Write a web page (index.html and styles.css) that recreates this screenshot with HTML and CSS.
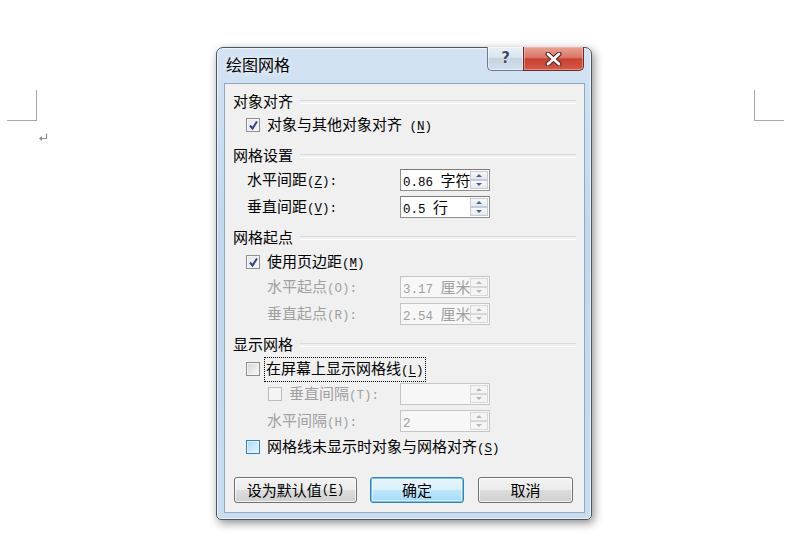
FILE: index.html
```html
<!DOCTYPE html>
<html lang="zh-CN">
<head>
<meta charset="utf-8">
<title>绘图网格</title>
<link rel="stylesheet" href="styles.css">
</head>
<body>
<div class="desk">
  <div class="mark mark-left"></div>
  <div class="mark mark-right"></div>
  <svg class="ret" width="10" height="9" viewBox="0 0 10 9"><path d="M8.5 0.5 V5.5 H2" fill="none" stroke="#8a8a8a" stroke-width="1.2"/><path d="M1 5.5 L4 3 L4 8 Z" fill="#8a8a8a"/></svg>

  <div class="window">
    <div class="titlebar">
      <span class="title">绘图网格</span>
      <div class="caption-btns">
        <div class="cbtn help"><span>?</span></div>
        <div class="cbtn close">
          <svg width="17" height="14" viewBox="0 0 17 14"><path d="M3 2 L14 12 M14 2 L3 12" stroke="#5a2420" stroke-width="5" stroke-linecap="round"/><path d="M3 2 L14 12 M14 2 L3 12" stroke="#ffffff" stroke-width="2.8" stroke-linecap="round"/></svg>
        </div>
      </div>
    </div>

    <div class="client">
      <div class="heading first">对象对齐</div>
      <div class="row cbrow mt2">
        <span class="cb checked"><svg width="11" height="11" viewBox="0 0 11 11"><path d="M2 5.5 L4.5 8.5 L9 1.5" fill="none" stroke="#31438a" stroke-width="2"/></svg></span>
        <span>对象与其他对象对齐<span class="lat"> (<u>N</u>)</span></span>
      </div>

      <div class="heading">网格设置</div>
      <div class="row lblrow">
        <span class="lbl w153">水平间距<span class="lat">(<u>Z</u>):</span></span>
        <div class="spin"><span class="val"><span class="lat">0.86 </span>字符</span><span class="arrows"><i class="up"></i><i class="dn"></i></span></div>
      </div>
      <div class="row lblrow">
        <span class="lbl w153">垂直间距<span class="lat">(<u>V</u>):</span></span>
        <div class="spin"><span class="val"><span class="lat">0.5 </span>行</span><span class="arrows"><i class="up"></i><i class="dn"></i></span></div>
      </div>

      <div class="heading">网格起点</div>
      <div class="row cbrow">
        <span class="cb checked"><svg width="11" height="11" viewBox="0 0 11 11"><path d="M2 5.5 L4.5 8.5 L9 1.5" fill="none" stroke="#31438a" stroke-width="2"/></svg></span>
        <span>使用页边距<span class="lat">(<u>M</u>)</span></span>
      </div>
      <div class="row subrow mt1 disabled">
        <span class="lbl w133">水平起点<span class="lat">(O):</span></span>
        <div class="spin off"><span class="val"><span class="lat">3.17 </span>厘米</span><span class="arrows"><i class="up"></i><i class="dn"></i></span></div>
      </div>
      <div class="row subrow disabled">
        <span class="lbl w133">垂直起点<span class="lat">(R):</span></span>
        <div class="spin off"><span class="val"><span class="lat">2.54 </span>厘米</span><span class="arrows"><i class="up"></i><i class="dn"></i></span></div>
      </div>

      <div class="heading">显示网格</div>
      <div class="row cbrow">
        <span class="cb"></span>
        <span class="focus">在屏幕上显示网格线<span class="lat">(<u>L</u>)</span></span>
      </div>
      <div class="row subcb mt1 disabled">
        <span class="cb off"></span>
        <span class="lbl w111">垂直间隔<span class="lat">(T):</span></span>
        <div class="spin off"><span class="val"></span><span class="arrows"><i class="up"></i><i class="dn"></i></span></div>
      </div>
      <div class="row subrow disabled">
        <span class="lbl w133">水平间隔<span class="lat">(H):</span></span>
        <div class="spin off"><span class="val"><span class="lat">2</span></span><span class="arrows"><i class="up"></i><i class="dn"></i></span></div>
      </div>
      <div class="row cbrow mt2">
        <span class="cb hot"></span>
        <span>网格线未显示时对象与网格对齐<span class="lat">(<u>S</u>)</span></span>
      </div>

      <div class="buttons">
        <div class="btn b-default">设为默认值<span class="lat">(<u>E</u>)</span></div>
        <div class="btn b-ok">确定</div>
        <div class="btn b-cancel">取消</div>
      </div>
    </div>
  </div>
</div>
</body>
</html>
```

FILE: styles.css
```css
* { box-sizing: border-box; }

html, body {
  margin: 0;
  padding: 0;
  background: #ffffff;
}

body {
  font-family: "Noto Sans CJK SC", "Noto Sans", sans-serif;
  font-size: 15px;
  color: #000;
}

.lat {
  font-family: "Liberation Mono", "DejaVu Sans Mono", monospace;
  font-size: 12.5px;
}

.desk {
  position: relative;
  width: 800px;
  height: 544px;
  padding: 47px 0 0 216px;
}

.mark {
  position: absolute;
  width: 30px;
  height: 31px;
}

.mark-left {
  left: 7px;
  top: 90px;
  border-right: 1px solid #a8a8a8;
  border-bottom: 1px solid #a8a8a8;
}

.mark-right {
  left: 754px;
  top: 90px;
  border-left: 1px solid #a8a8a8;
  border-bottom: 1px solid #a8a8a8;
}

.ret {
  position: absolute;
  left: 38px;
  top: 133px;
}

/* window frame */
.window {
  width: 376px;
  height: 473px;
  border: 1px solid #4b5663;
  border-radius: 7px 7px 5px 5px;
  background: linear-gradient(180deg, #d3e3f3 0%, #c2d7ed 40%, #c9dcef 100%);
  padding: 0 6px 6px 7px;
  box-shadow: 2px 3px 10px rgba(0, 0, 0, 0.45), inset 0 0 0 1px rgba(255, 255, 255, 0.6);
  display: flex;
  flex-direction: column;
}

.titlebar {
  height: 35px;
  display: flex;
  align-items: flex-start;
  justify-content: space-between;
}

.title {
  font-size: 16px;
  line-height: 20px;
  margin-top: 6px;
  padding-left: 2px;
  color: #000;
  text-shadow: 0 0 6px rgba(255, 255, 255, 0.9);
}

.caption-btns {
  display: flex;
  margin-top: -1px;
  margin-right: 1px;
}

.cbtn {
  height: 24px;
  display: flex;
  align-items: center;
  justify-content: center;
}

.help {
  width: 36px;
  border: 1px solid #6c7c8e;
  border-top: none;
  border-right: none;
  border-radius: 0 0 0 5px;
  background: linear-gradient(180deg, #e9f0f7 0%, #dbe5f0 45%, #c5d3e2 50%, #d3dfeb 100%);
  box-shadow: inset 0 0 0 1px rgba(255, 255, 255, 0.5);
}

.help span {
  font-family: "DejaVu Sans", sans-serif;
  font-weight: bold;
  font-size: 15px;
  line-height: 15px;
  color: #3d4f66;
  text-shadow: 0 0 2px #fff, 0 0 1px #fff;
}

.close {
  width: 61px;
  border: 1px solid #6a2b24;
  border-top: none;
  border-radius: 0 0 5px 0;
  background: linear-gradient(180deg, #e7a394 0%, #d9776a 45%, #c8402f 52%, #d45a48 100%);
  box-shadow: inset 0 0 0 1px rgba(255, 200, 190, 0.5);
}

/* client area */
.client {
  flex: 1;
  background: #f0f0f0;
  border: 1px solid #93a7bd;
  padding: 7px 8px 0 8px;
  display: flex;
  flex-direction: column;
  line-height: 20px;
}

.heading {
  height: 20px;
  display: flex;
  align-items: center;
  gap: 7px;
  margin-top: 8px;
  white-space: nowrap;
}

.heading.first { margin-top: 0; }

.heading::after {
  content: "";
  flex: 1;
  height: 2px;
  border-top: 1px solid #d5dbe1;
  border-bottom: 1px solid #ffffff;
  margin-top: 1px;
}

.row {
  height: 24px;
  display: flex;
  align-items: center;
  margin-top: 3px;
  white-space: nowrap;
}

.row.mt1 { margin-top: 1px; }
.row.mt2 { margin-top: 2px; }

.cbrow { padding-left: 13px; }
.lblrow { padding-left: 14px; }
.subrow { padding-left: 34px; }
.subcb { padding-left: 35px; }

.lbl { flex: none; }
.w153 { width: 153px; }
.w133 { width: 133px; }
.w111 { width: 111px; }

.disabled { color: #a0a0a0; }

u { text-decoration: underline; text-underline-offset: 2px; }

/* checkbox */
.cb {
  width: 14px;
  height: 14px;
  flex: none;
  margin-right: 7px;
  border: 1px solid #8e8f8f;
  background: linear-gradient(135deg, #d0d3d8 0%, #ececec 60%, #fafafa 100%);
  box-shadow: inset 0 0 0 1px #f4f4f4;
  display: flex;
  align-items: center;
  justify-content: center;
}

.cb.checked {
  background: linear-gradient(135deg, #e4e6ea 0%, #f6f6f6 100%);
}

.cb.off {
  border-color: #bcbcbc;
  background: #f4f4f4;
  box-shadow: none;
}

.cb.hot {
  border-color: #3c7fb1;
  background: linear-gradient(135deg, #a9d8f5 0%, #cfeafc 60%, #e8f6fe 100%);
  box-shadow: inset 0 0 0 1px #def1fc;
}

.focus {
  outline: 1px dotted #000;
  outline-offset: 0;
  padding: 0 1px;
  margin-left: -2px;
  line-height: 20px;
}

/* spin box */
.spin {
  width: 90px;
  height: 22px;
  flex: none;
  display: flex;
  align-items: stretch;
  border: 1px solid #8f8f8f;
  border-top-color: #7a7a7a;
  background: #fff;
  padding: 1px;
}

.spin .val {
  flex: 1;
  min-width: 0;
  white-space: nowrap;
  padding-left: 1px;
  line-height: 18px;
  font-size: 15px;
}

.spin.off {
  border-color: #c5c5c5;
  background: #f7f7f7;
  color: #a0a0a0;
}

.arrows {
  width: 18px;
  flex: none;
  display: flex;
  flex-direction: column;
  background: #f0f0f0;
}

.arrows i {
  flex: 1;
  display: flex;
  align-items: center;
  justify-content: center;
  border: 1px solid #c4ccd6;
  background: linear-gradient(180deg, #f8f9fb, #e4e8ee);
}

.arrows i::before {
  content: "";
  width: 0;
  height: 0;
  border-left: 3px solid transparent;
  border-right: 3px solid transparent;
}

.arrows .up::before { border-bottom: 3px solid #4b5f8a; }
.arrows .dn::before { border-top: 3px solid #4b5f8a; }

.spin.off .arrows i {
  border-color: #d8d8d8;
  background: #f4f4f4;
}

.spin.off .arrows .up::before { border-bottom-color: #b6b6b6; }
.spin.off .arrows .dn::before { border-top-color: #b6b6b6; }

/* buttons */
.buttons {
  display: flex;
  margin-top: 18px;
  padding-left: 1px;
  gap: 13px;
}

.btn {
  height: 26px;
  border: 1px solid #707070;
  border-radius: 3px;
  background: linear-gradient(180deg, #f3f3f3 0%, #ebebeb 48%, #dddddd 52%, #cfcfcf 100%);
  box-shadow: inset 0 0 0 1px rgba(255, 255, 255, 0.75);
  display: flex;
  align-items: center;
  justify-content: center;
  line-height: 20px;
  white-space: nowrap;
}

.b-default { width: 123px; }
.b-ok {
  width: 94px;
  border-color: #3c7fb1;
  box-shadow: inset 0 0 0 1px #6fc7f0, inset 0 0 0 2px rgba(255, 255, 255, 0.5);
  background: linear-gradient(180deg, #eaf6fd 0%, #d9f0fc 48%, #bee6fd 52%, #a7d9f5 100%);
}
.b-cancel { width: 95px; margin-left: 1px; }
```
